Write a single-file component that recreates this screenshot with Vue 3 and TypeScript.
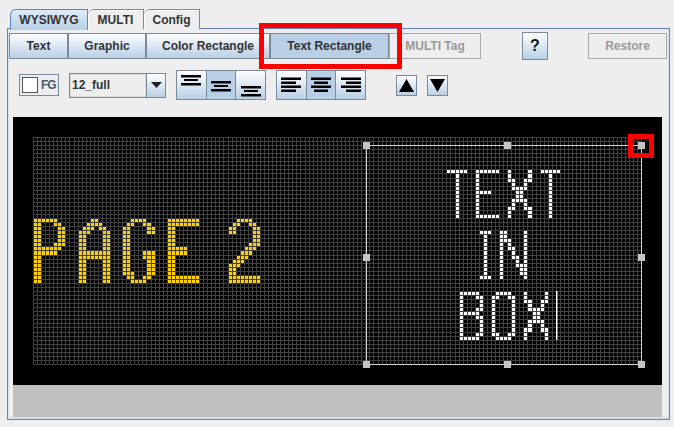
<script setup lang="ts">
// LED sign: the matrix is 150 x 56 cells, pitch slightly over 4px
const PITCH = 4.053
const COLS = 150
const ROWS = 56
const ORIGIN = 20

type Glyph = { col: number; row: number; bits: string[] }

const P = ['######..', '##...##.', '##....##', '##....##', '##....##', '##....##', '##...###', '#######.', '######..', '##......', '##......', '##......', '##......', '##......', '##......', '##......']
const A = ['...##...', '..####..', '.###.##.', '###...##', '##....##', '##....##', '##....##', '##....##', '########', '########', '##....##', '##....##', '##....##', '##....##', '##....##', '##....##']
const G = ['..####..', '.##..##.', '##....##', '##....##', '##......', '##......', '##......', '##......', '##...###', '##...###', '##....##', '##....##', '##....##', '###...##', '.##..##.', '..####..']
const E = ['########', '########', '##......', '##......', '##......', '##......', '##......', '#####...', '#####...', '##......', '##......', '##......', '##......', '##......', '########', '########']
const TWO = ['..####..', '.##..##.', '##....##', '##....##', '......##', '......##', '.....###', '....###.', '...###..', '..###...', '.###....', '###.....', '##......', '##......', '########', '########']

const T2 = ['#####', '..#..', '..#..', '..#..', '..#..', '..#..', '..#..', '..#..', '..#..', '..#..', '..#..', '..#..']
const E2 = ['######', '#.....', '#.....', '#.....', '#.....', '####..', '#.....', '#.....', '#.....', '#.....', '#.....', '######']
const X2 = ['#....#', '#....#', '##..##', '.#..#.', '.####.', '..##..', '..##..', '.####.', '.#..#.', '##..##', '#....#', '#....#']
const I2 = ['###', '.#.', '.#.', '.#.', '.#.', '.#.', '.#.', '.#.', '.#.', '.#.', '.#.', '###']
const N2 = ['##....#', '##....#', '###...#', '#.#...#', '#.##..#', '#..#..#', '#..##.#', '#...#.#', '#...###', '#....##', '#....##', '#.....#']
const B2 = ['#####.', '#...##', '#....#', '#....#', '#...##', '#####.', '#...##', '#....#', '#....#', '#....#', '#...##', '#####.']
const O2 = ['.####.', '##..##', '#....#', '#....#', '#....#', '#....#', '#....#', '#....#', '#....#', '#....#', '##..##', '.####.']

const amberGlyphs: Glyph[] = [
  { col: 0, row: 20, bits: P },
  { col: 11, row: 20, bits: A },
  { col: 22, row: 20, bits: G },
  { col: 33, row: 20, bits: E },
  { col: 48, row: 20, bits: TWO },
]

const whiteGlyphs: Glyph[] = [
  { col: 102, row: 8, bits: T2 },
  { col: 109, row: 8, bits: E2 },
  { col: 117, row: 8, bits: X2 },
  { col: 125, row: 8, bits: T2 },
  { col: 110, row: 23, bits: I2 },
  { col: 115, row: 23, bits: N2 },
  { col: 105, row: 38, bits: B2 },
  { col: 113, row: 38, bits: O2 },
  { col: 121, row: 38, bits: X2 },
]

function gridPos(i: number) {
  return ORIGIN + Math.round(i * PITCH)
}

function cells(glyphs: Glyph[]) {
  const out: { x: number; y: number; w: number; h: number }[] = []
  for (const g of glyphs) {
    g.bits.forEach((line, r) => {
      for (let c = 0; c < line.length; c++) {
        if (line[c] !== '#') continue
        const x = gridPos(g.col + c) + 1
        const y = gridPos(g.row + r) + 1
        out.push({ x, y, w: gridPos(g.col + c + 1) - x, h: gridPos(g.row + r + 1) - y })
      }
    })
  }
  return out
}

const amberCells = cells(amberGlyphs)
const whiteCells = cells(whiteGlyphs)

let gridD = ''
for (let i = 0; i <= COLS; i++) gridD += `M${gridPos(i) + 0.5} ${ORIGIN}V${gridPos(ROWS) + 1}`
for (let i = 0; i <= ROWS; i++) gridD += `M${ORIGIN} ${gridPos(i) + 0.5}H${gridPos(COLS) + 1}`

const handles = [
  [353, 28], [494, 28], [628, 28],
  [353, 140], [628, 140],
  [353, 247], [494, 247], [628, 247],
]

// bar offsets and lengths for the alignment buttons
const valign = [
  { on: false, y: 3 },
  { on: true, y: 9 },
  { on: false, y: 14 },
]
const halign = [
  { on: false, x: [0, 0, 0, 0], w: [20, 15, 20, 15] },
  { on: true, x: [0, 3, 0, 3], w: [20, 14, 20, 14] },
  { on: false, x: [0, 5, 0, 5], w: [20, 15, 20, 15] },
]
</script>

<template>
  <div class="window">
    <div class="tabs">
      <div class="tab tab-on">WYSIWYG</div>
      <div class="tab tab-multi">MULTI</div>
      <div class="tab tab-config">Config</div>
    </div>

    <div class="panel">
      <div class="row-modes">
        <button class="btn w-text">Text</button>
        <button class="btn w-graphic">Graphic</button>
        <button class="btn w-color">Color Rectangle</button>
        <button class="btn btn-on w-textrect">Text Rectangle</button>
        <button class="btn btn-off w-tag">MULTI Tag</button>
        <button class="btn btn-help">?</button>
        <button class="btn btn-off w-restore">Restore</button>
      </div>

      <div class="row-tools">
        <div class="fg">
          <span class="swatch" />
          <span class="fg-label">FG</span>
        </div>
        <div class="combo">
          <span class="combo-value">12_full</span>
          <span class="combo-arrow">
            <svg width="11" height="6" viewBox="0 0 11 6"><path d="M0 0H11L5.5 6Z" fill="#222" /></svg>
          </span>
        </div>

        <div class="group">
          <div v-for="(v, i) in valign" :key="i" class="seg" :class="{ 'seg-on': v.on }">
            <svg width="20" height="26" viewBox="0 0 20 26">
              <rect x="0" :y="v.y" width="20" height="2.5" fill="#000" />
              <rect x="3" :y="v.y + 4" width="14" height="2" fill="#000" />
              <rect x="0" :y="v.y + 8" width="20" height="2.5" fill="#000" />
            </svg>
          </div>
        </div>

        <div class="group">
          <div v-for="(h, i) in halign" :key="i" class="seg" :class="{ 'seg-on': h.on }">
            <svg width="20" height="26" viewBox="0 0 20 26">
              <rect v-for="n in 4" :key="n" :x="h.x[n - 1]" :y="5.5 + (n - 1) * 4" :width="h.w[n - 1]" height="2.5" fill="#000" />
            </svg>
          </div>
        </div>

        <div class="arrow arrow-up">
          <svg width="15" height="13" viewBox="0 0 15 13"><path d="M7.5 0L15 13H0Z" fill="#000" /></svg>
        </div>
        <div class="arrow">
          <svg width="15" height="13" viewBox="0 0 15 13"><path d="M0 0H15L7.5 13Z" fill="#000" /></svg>
        </div>
      </div>

      <div class="sign">
        <svg width="649" height="268" viewBox="0 0 649 268" role="img" aria-label="PAGE 2 / TEXT IN BOX">
          <path :d="gridD" stroke="#404040" stroke-width="1" fill="none" />
          <rect v-for="(c, i) in amberCells" :key="'a' + i" :x="c.x" :y="c.y" :width="c.w" :height="c.h" fill="#ffd000" />
          <rect v-for="(c, i) in whiteCells" :key="'w' + i" :x="c.x" :y="c.y" :width="c.w" :height="c.h" fill="#fff" />
          <rect x="543" y="174" width="1.5" height="49" fill="#fff" />
          <rect x="353.5" y="28.5" width="275" height="219" fill="none" stroke="#d4d4d4" stroke-width="1" />
          <rect v-for="(h, i) in handles" :key="'h' + i" :x="h[0] - 3" :y="h[1] - 3" width="7" height="7" fill="#c4c4c4" />
        </svg>
      </div>
      <div class="strip" />
    </div>

    <div class="mark mark-button" />
    <div class="mark mark-handle" />
  </div>
</template>

<style>
body {
  background: #eeeeee;
}
</style>

<style scoped>
.window {
  position: relative;
  width: 674px;
  height: 427px;
  box-sizing: border-box;
  padding: 9px 4px 7px 7px;
  background: #eeeeee;
  overflow: hidden;
  font: bold 12px "Liberation Sans", Arial, sans-serif;
  color: #333;
}

.tabs {
  display: flex;
  height: 19px;
  padding-left: 3px;
}

.tab {
  box-sizing: border-box;
  height: 20px;
  display: flex;
  align-items: center;
  justify-content: center;
  border: 1px solid #7a8a99;
  border-left-width: 0;
  border-bottom-width: 0;
  border-top-left-radius: 6px;
  background: #eeeeee;
  box-shadow: inset 1px 1px 0 #fff;
}

.tab-on {
  width: 78px;
  border-left-width: 1px;
  border-color: #6382bf;
  background: linear-gradient(#ddebf8, #b8cfe5);
  box-shadow: none;
  position: relative;
  z-index: 1;
  height: 21px;
}

.tab-multi {
  width: 56px;
}

.tab-config {
  width: 56px;
}

.panel {
  box-sizing: border-box;
  height: 392px;
  border: 1px solid #6382bf;
  padding: 3px 1px 2px 1px;
  background: #eeeeee;
  box-shadow: inset 1px 0 0 #d6e2ef, inset -1px 0 0 #d6e2ef, inset 0 -2px 0 #cfe0f0;
  display: flex;
  flex-direction: column;
}

.row-modes {
  display: flex;
  align-items: center;
  height: 28px;
}

.btn {
  box-sizing: border-box;
  height: 26px;
  padding: 0;
  margin-right: -1px;
  border: 1px solid #7a8a99;
  border-right-width: 2px;
  background: linear-gradient(#fdfeff 0%, #e6eef6 35%, #b8cfe5 100%);
  font: inherit;
  color: #333;
}

.w-text {
  width: 60px;
}

.w-graphic {
  width: 79px;
}

.w-color {
  width: 125px;
}

.w-textrect {
  width: 120px;
}

.btn-on {
  background: #b8cfe5;
}

.btn-off {
  background: #eeeeee;
  border: 1px solid #a8a8a8;
  color: #999;
}

.w-tag {
  width: 92px;
}

.btn-help {
  width: 26px;
  height: 28px;
  margin-left: 42px;
  margin-right: 0;
  font-size: 16px;
  color: #111;
  border-right-width: 1px;
}

.w-restore {
  width: 79px;
  margin-left: 40px;
}

.row-tools {
  display: flex;
  align-items: center;
  height: 30px;
  margin-top: 10px;
  padding-left: 10px;
}

.fg {
  box-sizing: border-box;
  width: 40px;
  height: 22px;
  display: flex;
  align-items: center;
  gap: 3px;
  padding-left: 2px;
  border: 1px solid #7a8a99;
  color: #4a5a6a;
}

.fg-label {
  letter-spacing: -1px;
}

.swatch {
  box-sizing: border-box;
  width: 16px;
  height: 16px;
  background: #fff;
  border: 1px solid #555;
}

.combo {
  box-sizing: border-box;
  width: 97px;
  height: 25px;
  margin-left: 10px;
  display: flex;
  border: 1px solid #7a8a99;
}

.combo-value {
  flex: 1;
  display: flex;
  align-items: center;
  padding-left: 2px;
  border-right: 1px solid #7a8a99;
  box-shadow: inset 0 0 0 1px #dcdcdc;
}

.combo-arrow {
  width: 18px;
  display: flex;
  align-items: center;
  justify-content: center;
  background: linear-gradient(#fdfeff 0%, #e6eef6 35%, #b8cfe5 100%);
}

.group {
  box-sizing: border-box;
  width: 90px;
  height: 30px;
  display: flex;
  margin-left: 10px;
  border: 1px solid #7a8a99;
}

.seg {
  box-sizing: border-box;
  flex: 1;
  display: flex;
  align-items: center;
  justify-content: center;
  background: linear-gradient(#fdfeff 0%, #e6eef6 35%, #b8cfe5 100%);
}

.seg + .seg {
  border-left: 1px solid #7a8a99;
}

.seg-on {
  background: #b8cfe5;
}

.arrow {
  box-sizing: border-box;
  width: 21px;
  height: 21px;
  margin-left: 10px;
  display: flex;
  align-items: center;
  justify-content: center;
  border: 1px solid #7a8a99;
  background: linear-gradient(#fdfeff 0%, #e6eef6 35%, #b8cfe5 100%);
}

.arrow-up {
  margin-left: 30px;
}

.sign {
  width: 649px;
  height: 268px;
  margin: 17px 0 0 4px;
  background: #000;
}

.sign svg {
  display: block;
}

.strip {
  width: 649px;
  height: 32px;
  margin-left: 4px;
  background: #c0c0c0;
}

.mark {
  position: absolute;
  box-sizing: border-box;
  border: 5px solid #f00;
}

.mark-button {
  left: 259px;
  top: 23px;
  width: 143px;
  height: 46px;
}

.mark-handle {
  left: 628px;
  top: 134px;
  width: 26px;
  height: 24px;
}
</style>
